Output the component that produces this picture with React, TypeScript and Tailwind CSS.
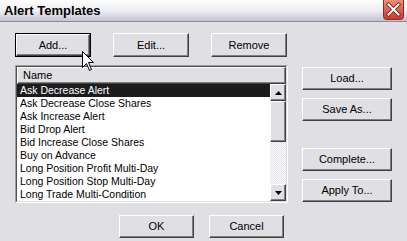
import React from "react";

const ITEMS = [
  "Ask Decrease Alert",
  "Ask Decrease Close Shares",
  "Ask Increase Alert",
  "Bid Drop Alert",
  "Bid Increase Close Shares",
  "Buy on Advance",
  "Long Position Profit Multi-Day",
  "Long Position Stop Multi-Day",
  "Long Trade Multi-Condition",
];

// classic raised 3D edge
const raised =
  "border border-t-white border-l-white border-r-[#404040] border-b-[#404040] shadow-[inset_-1px_-1px_0_#808080] bg-[#e0dfe3]";

function Button({ label, w, h, isDefault }: { label: string; w: string; h: string; isDefault?: boolean }) {
  if (isDefault) {
    return (
      <div className={`${w} ${h} border border-black flex`}>
        <div className={`flex-1 ${raised} flex items-center justify-center text-[11px] text-black`}>{label}</div>
      </div>
    );
  }
  return (
    <div className={`${w} ${h} ${raised} flex items-center justify-center text-[11px] text-black`}>{label}</div>
  );
}

function Arrow({ up }: { up?: boolean }) {
  return (
    <svg width="7" height="4" viewBox="0 0 7 4">
      {up ? <path d="M3.5 0 L7 4 L0 4 Z" fill="#000" /> : <path d="M0 0 L7 0 L3.5 4 Z" fill="#000" />}
    </svg>
  );
}

export default function App() {
  return (
    <div
      className="relative w-[407px] h-[241px] overflow-hidden bg-[#e0dfe3] flex flex-col"
      style={{ fontFamily: '"Liberation Sans", Arial, sans-serif' }}
    >
      {/* Title bar */}
      <div className="h-[22px] shrink-0 bg-gradient-to-b from-white via-[#eeeef3] to-[#c2c3d2] border-b border-[#8a8a9e] flex items-center pl-[4px] pr-[3px]">
        <span className="text-[13px] font-bold text-black leading-none">Alert Templates</span>
        <div className="ml-auto self-start">
          <svg width="21" height="20" viewBox="0 0 21 20">
            <defs>
              <linearGradient id="cl" x1="0" y1="0" x2="0" y2="1">
                <stop offset="0" stopColor="#ee8c7c" />
                <stop offset="1" stopColor="#c8382c" />
              </linearGradient>
            </defs>
            <path d="M0.5 0 V16.5 Q0.5 19.5 3.5 19.5 H17.5 Q20.5 19.5 20.5 16.5 V0" fill="url(#cl)" stroke="#8e2a20" />
            <path d="M5.5 4.5 L15.5 14.5 M15.5 4.5 L5.5 14.5" stroke="#6e1c14" strokeWidth="3.6" strokeLinecap="square" />
            <path d="M5.5 4.5 L15.5 14.5 M15.5 4.5 L5.5 14.5" stroke="#ffffff" strokeWidth="2" strokeLinecap="square" />
          </svg>
        </div>
      </div>

      {/* Top buttons */}
      <div className="mt-[11px] pl-[15px] flex gap-[22px]">
        <Button label="Add..." w="w-[76px]" h="h-[24px]" isDefault />
        <Button label="Edit..." w="w-[76px]" h="h-[24px]" />
        <Button label="Remove" w="w-[76px]" h="h-[24px]" />
      </div>

      {/* List + side buttons */}
      <div className="mt-[8px] pl-[15px] flex">
        <div className="w-[273px] h-[138px] border border-t-[#a0a0a0] border-l-[#a0a0a0] border-r-white border-b-white">
          <div className="h-full border border-t-[#505050] border-l-[#505050] border-r-[#e0dfe3] border-b-[#e0dfe3] bg-white flex flex-col">
            <div className={`h-[17px] shrink-0 ${raised} flex items-center pl-[5px] text-[11px] text-black`}>Name</div>
            <div className="flex flex-1 min-h-0">
              <div className="flex-1 flex flex-col">
                {ITEMS.map((item, i) => (
                  <div
                    key={item}
                    className={`h-[13px] flex items-center pl-[3px] text-[10.5px] leading-none whitespace-nowrap ${
                      i === 0 ? "bg-[#1c1c1c] text-white" : "text-black"
                    }`}
                  >
                    {item}
                  </div>
                ))}
              </div>
              <div className="w-[16px] flex flex-col">
                <div className={`h-[17px] ${raised} flex items-center justify-center`}>
                  <Arrow up />
                </div>
                <div className={`h-[41px] ${raised}`} />
                <div className="flex-1 bg-[repeating-conic-gradient(#ffffff_0_25%,#e0dfe3_0_50%)] bg-size-[2px_2px]" />
                <div className={`h-[17px] ${raised} flex items-center justify-center`}>
                  <Arrow />
                </div>
              </div>
            </div>
          </div>
        </div>

        <div className="ml-[14px] pt-[2px] flex flex-col">
          <Button label="Load..." w="w-[90px]" h="h-[23px]" />
          <div className="mt-[8px]">
            <Button label="Save As..." w="w-[90px]" h="h-[23px]" />
          </div>
          <div className="mt-[27px]">
            <Button label="Complete..." w="w-[90px]" h="h-[23px]" />
          </div>
          <div className="mt-[8px]">
            <Button label="Apply To..." w="w-[90px]" h="h-[23px]" />
          </div>
        </div>
      </div>

      {/* Bottom buttons */}
      <div className="mt-[12px] pl-[119px] flex gap-[15px]">
        <Button label="OK" w="w-[75px]" h="h-[23px]" />
        <Button label="Cancel" w="w-[75px]" h="h-[23px]" />
      </div>

      {/* mouse pointer */}
      <svg className="absolute left-[82px] top-[51px]" width="13" height="21" viewBox="0 0 13 21">
        <path d="M0.5 0.5 V16.5 L4.5 12.5 L7.5 19.5 L9.5 18.5 L6.5 11.5 L11.5 11.5 Z" fill="#fff" stroke="#000" strokeLinejoin="miter" />
      </svg>
    </div>
  );
}
